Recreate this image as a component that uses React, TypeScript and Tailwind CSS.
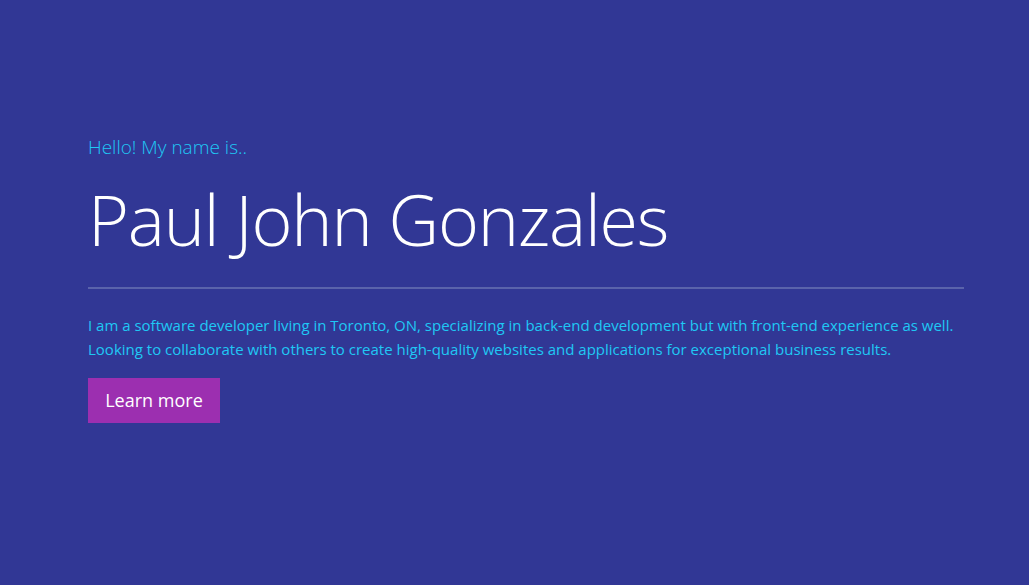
export default function App() {
  return (
    <div className="min-h-[585px] w-full bg-[#313795] font-['Open_Sans',sans-serif]">
      <div className="pl-[88px] pr-[65px] pt-[134px]">
        {/* Intro */}
        <p className="text-[19px] leading-[26px] font-light text-[#1fc8f4]">Hello! My name is..</p>
        <h1 className="mt-[16px] text-[70px] leading-[86px] font-light tracking-[-1.2px] text-white">
          Paul John Gonzales
        </h1>
        <hr className="mt-[25px] border-t-2 border-[#5a63ab]" />
        <p className="mt-[24px] text-[15px] leading-[24px] text-[#1fc8f4]">
          I am a software developer living in Toronto, ON, specializing in back-end development but with front-end experience as well.
          <br />
          Looking to collaborate with others to create high-quality websites and applications for exceptional business results.
        </p>
        <button className="mt-[17px] h-[45px] w-[132px] bg-[#9c2fb0] text-[18px] text-white">Learn more</button>
      </div>
    </div>
  );
}
